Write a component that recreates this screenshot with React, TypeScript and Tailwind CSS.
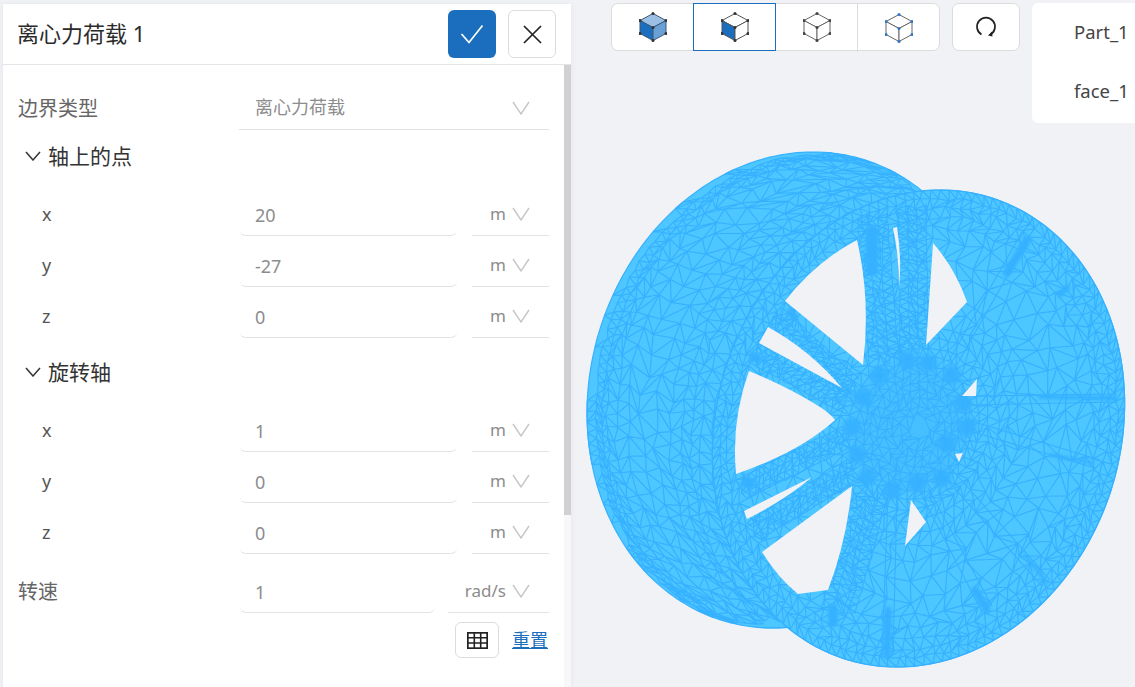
import React from "react";

type P = [number, number];
const BACK = { cx: 793, cy: 390, rx: 205, ry: 238, s: -20 };
const FRONT = { cx: 918.5, cy: 428.5, rx: 205, ry: 238.5, s: -21.5 };
type E = typeof BACK;
const on = (e: E, t: number, f = 1): P => [
  e.cx + f * (e.rx * Math.cos(t) + e.s * Math.sin(t)),
  e.cy + f * e.ry * Math.sin(t),
];
const inside = (e: E, p: P, lim = 0.98) => {
  const y = (p[1] - e.cy) / e.ry;
  const x = (p[0] - e.cx - e.s * y) / e.rx;
  return x * x + y * y < lim * lim;
};
const ellipsePath = (e: E) => {
  let d = "";
  for (let i = 0; i < 240; i++) {
    const p = on(e, (i / 240) * Math.PI * 2);
    d += (i ? "L" : "M") + p[0].toFixed(1) + " " + p[1].toFixed(1);
  }
  return d + "Z";
};

let seed = 12345;
const rnd = () => {
  seed = (seed * 16807) % 2147483647;
  return seed / 2147483647 - 0.5;
};
const seg = (a: P, b: P) =>
  `M${a[0].toFixed(1)} ${a[1].toFixed(1)}L${b[0].toFixed(1)} ${b[1].toFixed(1)}`;

function weave(rows: { a: number; p: P }[][], keep: (a: P, b: P) => boolean) {
  let d = "";
  const add = (a: P, b: P) => {
    if (keep(a, b)) d += seg(a, b);
  };
  rows.forEach((row, r) => {
    row.forEach((pt, i) => add(pt.p, row[(i + 1) % row.length].p));
    if (r === rows.length - 1) return;
    const next = rows[r + 1];
    let i = 0;
    let j = 0;
    while (i < row.length || j < next.length) {
      const A = row[i % row.length];
      const B = next[j % next.length];
      add(A.p, B.p);
      const ai = (i + 1) / row.length;
      const bj = (j + 1) / next.length;
      if (ai < bj) i++;
      else j++;
    }
  });
  return d;
}

function buildFront() {
  const fr = [1, 0.962, 0.925, 0.885, 0.84, 0.785, 0.715, 0.635, 0.555, 0.49, 0.435, 0.385, 0.34, 0.3, 0.265, 0.23, 0.195, 0.16, 0.125, 0.09, 0.055];
  const rows = fr.map((f, r) => {
    const gap = Math.abs((fr[r + 1] ?? 0) - f) * 220;
    const size = Math.max(7, Math.min(gap * 1.15, 22));
    const n = Math.max(8, Math.round((2 * Math.PI * 220 * f) / size));
    const off = r % 2 ? 0.5 : 0;
    return Array.from({ length: n }, (_, i) => {
      const a = (i + off) / n;
      const jit = r === 0 ? 0 : Math.min(gap * 0.28, 5);
      const p = on(FRONT, a * Math.PI * 2, f);
      return { a, p: [p[0] + rnd() * jit * 2, p[1] + rnd() * jit * 2] as P };
    });
  });
  return weave(rows, () => true);
}

function buildBarrel() {
  const ls = [0, 0.065, 0.12, 0.16, 0.23, 0.32, 0.43, 0.55, 0.66, 0.75, 0.83, 0.9, 1];
  const rows = ls.map((l, r) => {
    const gap = Math.abs((ls[r + 1] ?? 1.06) - l) * 125;
    const size = Math.max(8.5, Math.min(gap * 1.25, 20));
    const n = Math.round(1400 / size);
    const off = r % 2 ? 0.5 : 0;
    return Array.from({ length: n }, (_, i) => {
      const a = (i + off) / n;
      const t = a * Math.PI * 2;
      const b = on(BACK, t);
      const f = on(FRONT, t);
      const j = r === 0 ? 0 : Math.min(gap * 0.25, 4);
      return {
        a,
        p: [b[0] + (f[0] - b[0]) * l + rnd() * j * 2, b[1] + (f[1] - b[1]) * l + rnd() * j * 2] as P,
      };
    });
  });
  return weave(rows, (a, b) => {
    const m: P = [(a[0] + b[0]) / 2, (a[1] + b[1]) / 2];
    return !inside(FRONT, m) && inside(BACK, a, 1) && inside(BACK, b, 1);
  });
}

const SPOKES: [P, P, number][] = [
  [[775, 315], [852, 386], 20],
  [[752, 350], [848, 402], 24],
  [[740, 490], [848, 436], 22],
  [[752, 532], [852, 470], 22],
  [[838, 612], [872, 490], 34],
  [[872, 215], [884, 360], 30],
  [[912, 205], [914, 350], 28],
];
const STREAKS: [P, P][] = [
  [[1030, 236], [955, 368]],
  [[1022, 232], [948, 362]],
  [[1117, 394], [970, 396]],
  [[1117, 402], [970, 405]],
  [[1100, 460], [968, 420]],
  [[1095, 468], [966, 430]],
  [[1050, 580], [948, 465]],
  [[1042, 586], [940, 472]],
  [[992, 606], [928, 488]],
  [[982, 612], [920, 492]],
  [[893, 655], [897, 495]],
  [[882, 655], [888, 495]],
];

function buildSpokes() {
  let d = "";
  SPOKES.forEach(([a, b, w]) => {
    const dx = b[0] - a[0];
    const dy = b[1] - a[1];
    const len = Math.hypot(dx, dy);
    const nx = -dy / len;
    const ny = dx / len;
    const lanes = 3;
    const steps = Math.round(len / 8);
    const pt = (i: number, l: number): P => {
      const u = (i + (l % 2 ? 0.5 : 0)) / steps;
      const o = (l / lanes - 0.5) * w;
      return [a[0] + dx * u + nx * o + rnd() * 1.5, a[1] + dy * u + ny * o + rnd() * 1.5];
    };
    for (let l = 0; l <= lanes; l++) {
      for (let i = 0; i < steps; i++) {
        d += seg(pt(i, l), pt(i + 1, l));
        if (l < lanes) {
          d += seg(pt(i, l), pt(i, l + 1));
          d += seg(pt(i + 1, l), pt(i, l + 1));
        }
      }
    }
  });
  STREAKS.forEach(([a, b]) => {
    d += seg(a, b);
  });
  return d;
}

const BARREL = buildBarrel();
const DISC = buildFront();
const STRIPS = buildSpokes();
const BACK_D = ellipsePath(BACK);
const FRONT_D = ellipsePath(FRONT);

const HOLES = [
  "M857 240Q815 262 785 301L863 365Q871 300 857 240Z",
  "M768 327Q810 350 842 388L759 343Z",
  "M749 371Q790 388 820 407Q832 415 835 420Q800 452 736 474Q731 420 749 371Z",
  "M812 477L744 511L747 519Q785 500 812 477Z",
  "M852 486L762 552Q778 578 798 594L828 590Q847 540 852 486Z",
  "M893 228L897 227Q902 260 899 288Q899 255 893 228Z",
  "M933 243Q955 268 967 302L926 345Q930 290 933 243Z",
  "M977 379L962 396L976 396Z",
  "M955 454L963 453L959 462Z",
  "M911 500L926 522L905 546Z",
];
const BOLTS: P[] = [[879, 375], [907, 360], [928, 363], [952, 375], [963, 403], [967, 427], [947, 443], [942, 478], [917, 483], [892, 490], [867, 477], [857, 455], [852, 427], [863, 397]];
const BLOBS: [P, P, number][] = [
  [[872, 232], [872, 270], 12],
  [[1027, 240], [1007, 273], 8],
  [[1067, 288], [1060, 294], 6],
  [[1115, 398], [1040, 397], 4],
  [[1093, 463], [1050, 455], 3],
  [[1047, 583], [1025, 555], 3],
  [[987, 610], [975, 590], 7],
  [[887, 655], [888, 610], 7],
  [[833, 610], [833, 622], 10],
  [[747, 483], [750, 483], 11],
  [[753, 357], [758, 360], 7],
  [[790, 312], [794, 316], 7],
];

function Wheel() {
  return (
    <svg className="absolute left-0 top-0" width={564} height={687} viewBox="571 0 564 687" aria-hidden="true">
      <defs>
        <radialGradient id="hub">
          <stop offset="0" stopColor="#38b2ff" stopOpacity="0.35" />
          <stop offset="0.75" stopColor="#38b2ff" stopOpacity="0.3" />
          <stop offset="1" stopColor="#38b2ff" stopOpacity="0" />
        </radialGradient>
        <radialGradient id="bolt">
          <stop offset="0" stopColor="#36b1ff" stopOpacity="1" />
          <stop offset="0.55" stopColor="#36b1ff" stopOpacity="0.8" />
          <stop offset="1" stopColor="#36b1ff" stopOpacity="0" />
        </radialGradient>
        <filter id="soft" x="-30%" y="-30%" width="160%" height="160%">
          <feGaussianBlur stdDeviation="1.5" />
        </filter>
      </defs>
      <path d={BACK_D} fill="#4ec6ff" stroke="#36b1ff" strokeWidth={1.2} />
      <path d={BARREL} fill="none" stroke="#36b1ff" strokeWidth={1.15} />
      <path d={FRONT_D} fill="#4ec6ff" stroke="#36b1ff" strokeWidth={1.2} />
      <path d={DISC} fill="none" stroke="#36b1ff" strokeWidth={1.15} />
      <path d={STRIPS} fill="none" stroke="#36b1ff" strokeWidth={1.1} />
      <ellipse cx={908} cy={425} rx={66} ry={74} fill="url(#hub)" />
      <g filter="url(#soft)">
        {BLOBS.map(([a, b, w], i) => (
          <line key={i} x1={a[0]} y1={a[1]} x2={b[0]} y2={b[1]} stroke="#36b1ff" strokeWidth={w} strokeLinecap="round" />
        ))}
      </g>
      {BOLTS.map((p, i) => (
        <circle key={i} cx={p[0]} cy={p[1]} r={12} fill="url(#bolt)" />
      ))}
      <path d={HOLES.join("")} fill="#f0f2f6" />
    </svg>
  );
}

function Chevron({ dark = false }: { dark?: boolean }) {
  return (
    <svg width={dark ? 16 : 18} height={dark ? 10 : 14} viewBox={dark ? "0 0 16 10" : "0 0 18 14"} fill="none" stroke={dark ? "#333333" : "#c6c6c6"} strokeWidth={dark ? 1.5 : 1.4} aria-hidden="true">
      {dark ? <polyline points="1,1 8,9 15,1" /> : <polyline points="1,1 9,13 17,1" />}
    </svg>
  );
}

function Unit({ label = "m", wide = false }: { label?: string; wide?: boolean }) {
  return (
    <div className={`flex h-full items-center justify-end gap-[6px] border-b border-[#e2e2e2] pr-[19px] pb-[8px] text-[17px] text-[#8c8c8c] ${wide ? "w-[101px]" : "w-[77px]"}`}>
      <span className="leading-none">{label}</span>
      <Chevron />
    </div>
  );
}

function Row({ name, value }: { name: string; value: string }) {
  return (
    <div className="flex h-[51px] items-end pl-[15px]">
      <span className="mb-[10px] w-[222px] pl-[24px] text-[18px] leading-6 text-[#555555]">{name}</span>
      <div className="flex h-[36px] w-[309px] justify-between">
        <div className="flex h-full w-[217px] items-center rounded-b-[6px] border-b border-[#e2e2e2] pl-[15px] pb-[5px] text-[18px] text-[#8c8c8c]">{value}</div>
        <Unit />
      </div>
    </div>
  );
}

function Section({ name, className }: { name: string; className: string }) {
  return (
    <div className={`flex items-center pl-[22px] text-[21px] leading-7 text-[#333333] ${className}`}>
      <Chevron dark />
      <span className="ml-[7px]">{name}</span>
    </div>
  );
}

function Cube({ top, left, right, dot, edge }: { top: string; left: string; right: string; dot: string; edge: string }) {
  const pts: P[] = [[14, 1], [27, 8], [27, 21], [14, 28], [1, 21], [1, 8], [14, 15]];
  return (
    <svg width={28} height={30} viewBox="0 0 28 29" aria-hidden="true">
      <polygon points="14,1 27,8 14,15 1,8" fill={top} stroke={edge} strokeWidth={1} />
      <polygon points="1,8 14,15 14,28 1,21" fill={left} stroke={edge} strokeWidth={1} />
      <polygon points="27,8 14,15 14,28 27,21" fill={right} stroke={edge} strokeWidth={1} />
      {pts.map((p, i) => (
        <circle key={i} cx={p[0]} cy={p[1]} r={1.5} fill={dot} />
      ))}
    </svg>
  );
}

export default function App() {
  return (
    <div className="flex h-[687px] w-[1135px] overflow-hidden bg-[#f0f2f6] pl-[3px] font-['Noto_Sans','Noto_Sans_CJK_SC',sans-serif]">
      <aside className="z-10 mt-[4px] flex h-[683px] w-[568px] shrink-0 flex-col bg-white shadow-[0_0_6px_rgba(0,0,0,0.06)]">
        <header className="flex h-[61px] shrink-0 items-center justify-between border-b border-[#e3e5e8] pl-[14px] pr-[15px]">
          <h1 className="mb-[3px] text-[22px] font-normal leading-8 text-[#2b2b2b]">离心力荷载 1</h1>
          <div className="flex gap-[12px]">
            <button className="flex h-[48px] w-[48px] items-center justify-center rounded-[6px] bg-[#1b6ebd]">
              <svg width={24} height={20} viewBox="0 0 24 20" fill="none" stroke="white" strokeWidth={1.7} aria-hidden="true">
                <polyline points="1.5,10 9,18.5 22.5,1.5" />
              </svg>
            </button>
            <button className="flex h-[48px] w-[48px] items-center justify-center rounded-[6px] border border-[#dcdcdc] bg-white">
              <svg width={19} height={19} viewBox="0 0 19 19" fill="none" stroke="#222222" strokeWidth={1.7} aria-hidden="true">
                <path d="M1 1L18 18M18 1L1 18" />
              </svg>
            </button>
          </div>
        </header>
        <div className="flex min-h-0 flex-1">
          <div className="min-w-0 flex-1">
            <div className="flex h-[65px] items-end pl-[15px]">
              <span className="mb-[7px] w-[221px] text-[20px] leading-7 text-[#666666]">边界类型</span>
              <div className="flex h-[44px] w-[310px] items-center justify-between border-b border-[#e2e2e2] pl-[16px] pr-[19px] text-[18px] text-[#8c8c8c]">
                <span>离心力荷载</span>
                <Chevron />
              </div>
            </div>
            <Section name="轴上的点" className="mt-[12px]" />
            <div className="mt-[15px]">
              <Row name="x" value="20" />
              <Row name="y" value="-27" />
              <Row name="z" value="0" />
            </div>
            <Section name="旋转轴" className="mt-[20px]" />
            <div className="mt-[15px]">
              <Row name="x" value="1" />
              <Row name="y" value="0" />
              <Row name="z" value="0" />
            </div>
            <div className="mt-[23px] flex h-[36px] items-end pl-[15px]">
              <span className="mb-[7px] w-[222px] text-[20px] leading-7 text-[#666666]">转速</span>
              <div className="flex h-full w-[309px] justify-between">
                <div className="flex h-full w-[195px] items-center rounded-b-[6px] border-b border-[#e2e2e2] pl-[15px] pb-[5px] text-[18px] text-[#8c8c8c]">1</div>
                <Unit label="rad/s" wide />
              </div>
            </div>
            <div className="mt-[9px] flex items-center justify-end gap-[13px] pr-[16px]">
              <button className="flex h-[36px] w-[44px] items-center justify-center rounded-[6px] border border-[#dcdcdc] bg-white">
                <svg width={21} height={17} viewBox="0 0 21 17" fill="none" stroke="#222222" strokeWidth={1.6} aria-hidden="true">
                  <rect x={0.8} y={0.8} width={19.4} height={15.4} strokeWidth={1.8} />
                  <path d="M7.3 1V16M13.7 1V16M1 5.8H20M1 11H20" />
                </svg>
              </button>
              <a className="text-[18px] leading-6 text-[#1b6ebd] underline">重置</a>
            </div>
          </div>
          <div className="h-full w-[7px] shrink-0 bg-[#f7f7f7]">
            <div className="h-[450px] w-full bg-[#d1d1d1]" />
          </div>
        </div>
      </aside>

      <main className="relative flex-1">
        <Wheel />
        <div className="relative flex items-start gap-[12px] pl-[40px] pt-[3px]">
          <div className="flex h-[48px] w-[329px] rounded-[7px] border border-[#dcdcdc] bg-white">
            <div className="flex w-[81px] items-center justify-center">
              <Cube top="#9cc0e4" left="#1b6ebd" right="#6aa0d6" dot="#333333" edge="#3a5a7a" />
            </div>
            <div className="-my-px flex h-[48px] w-[83px] items-center justify-center border border-[#1b6ebd]">
              <Cube top="#ffffff" left="#1b6ebd" right="#ffffff" dot="#333333" edge="#555555" />
            </div>
            <div className="flex w-[81px] items-center justify-center">
              <Cube top="#ffffff" left="#ffffff" right="#ffffff" dot="#444444" edge="#666666" />
            </div>
            <div className="-mb-px flex h-[48px] flex-1 items-center justify-center border-l border-[#dcdcdc]">
              <Cube top="#ffffff" left="#ffffff" right="#ffffff" dot="#2a78c8" edge="#666666" />
            </div>
          </div>
          <button className="flex h-[48px] w-[68px] items-center justify-center rounded-[7px] border border-[#dcdcdc] bg-white">
            <svg width={22} height={22} viewBox="0 0 22 22" fill="none" aria-hidden="true">
              <path d="M6.5 18.5A9 9 0 1 1 15.5 18.5" stroke="#222222" strokeWidth={1.7} />
              <path d="M13 19.5L17.5 20.5L17 15.5Z" fill="#222222" />
            </svg>
          </button>
          <div className="flex h-[120px] w-[130px] shrink-0 flex-col rounded-[6px] bg-white pl-[42px] text-[18.5px] text-[#444444]">
            <div className="flex h-[58px] items-center">Part_1</div>
            <div className="flex h-[60px] items-center">face_1</div>
          </div>
        </div>
      </main>
    </div>
  );
}
